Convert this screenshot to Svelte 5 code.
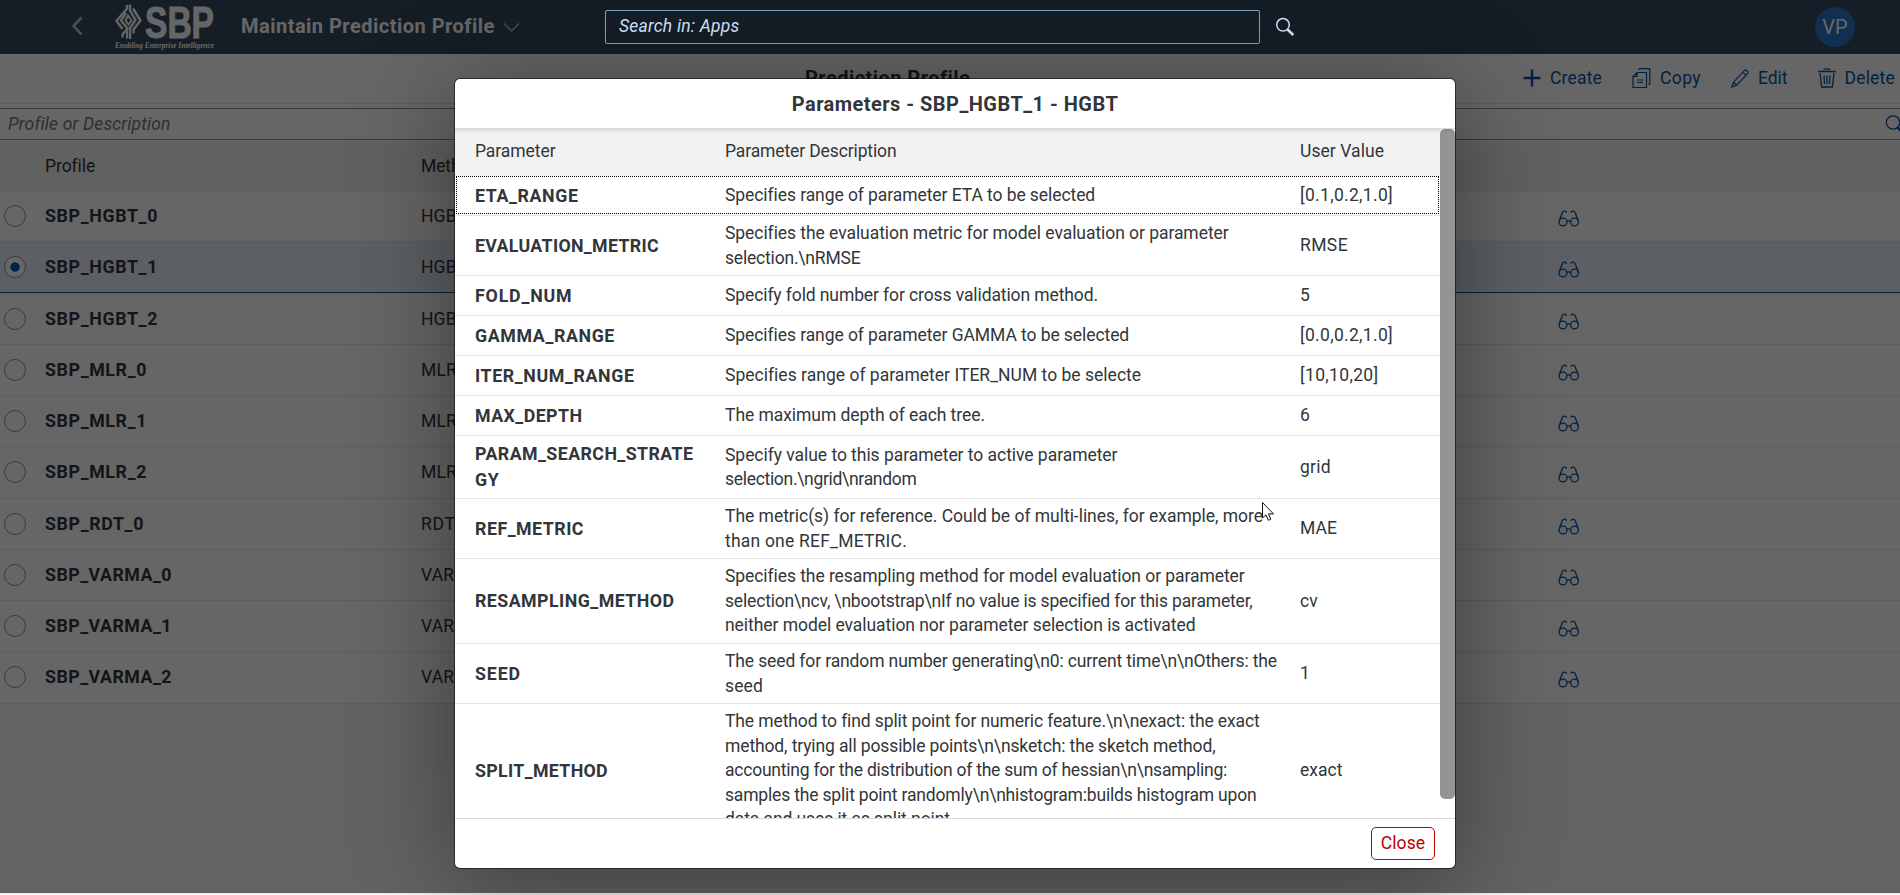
<script>
  // Spreads the letters of a text so that it takes up the given width.
  function fit(node, width) {
    if (!width) return;
    const natural = node.getBoundingClientRect().width;
    const count = node.textContent.length;
    node.style.letterSpacing = `${(width - natural) / count}px`;
  }

  const profiles = [
    ['SBP_HGBT_0', 'HGBT', 113],
    ['SBP_HGBT_1', 'HGBT', 113],
    ['SBP_HGBT_2', 'HGBT', 113],
    ['SBP_MLR_0', 'MLR', 102],
    ['SBP_MLR_1', 'MLR', 102],
    ['SBP_MLR_2', 'MLR', 102],
    ['SBP_RDT_0', 'RDT', 99],
    ['SBP_VARMA_0', 'VARMA', 127],
    ['SBP_VARMA_1', 'VARMA', 127],
    ['SBP_VARMA_2', 'VARMA', 127]
  ];
  const selected = 'SBP_HGBT_1';
  const methodWidth = { HGBT: 46, MLR: 36, RDT: 34.5, VARMA: 60.5 };

  // Each text is a list of [line, width].
  const params = [
    { h: 40, name: [['ETA_RANGE', 103.5]], text: [['Specifies range of parameter ETA to be selected', 369.5]], value: ['[0.1,0.2,1.0]', 93] },
    { h: 60, name: [['EVALUATION_METRIC', 184]], text: [['Specifies the evaluation metric for model evaluation or parameter', 503], ['selection.\\nRMSE', 135.5]], value: ['RMSE', 48] },
    { h: 40, name: [['FOLD_NUM', 97.5]], text: [['Specify fold number for cross validation method.', 373]], value: ['5', 0] },
    { h: 40, name: [['GAMMA_RANGE', 140]], text: [['Specifies range of parameter GAMMA to be selected', 403.5]], value: ['[0.0,0.2,1.0]', 93] },
    { h: 40, name: [['ITER_NUM_RANGE', 159.5]], text: [['Specifies range of parameter ITER_NUM to be selecte', 415.5]], value: ['[10,10,20]', 78.5] },
    { h: 40, name: [['MAX_DEPTH', 107.5]], text: [['The maximum depth of each tree.', 260]], value: ['6', 0] },
    { h: 63, name: [['PARAM_SEARCH_STRATE', 218.5], ['GY', 24.5]], text: [['Specify value to this parameter to active parameter', 392.5], ['selection.\\ngrid\\nrandom', 191.5]], value: ['grid', 31] },
    { h: 60, name: [['REF_METRIC', 109]], text: [['The metric(s) for reference. Could be of multi-lines, for example, more', 538], ['than one REF_METRIC.', 182]], value: ['MAE', 37] },
    { h: 85, name: [['RESAMPLING_METHOD', 199.5]], text: [['Specifies the resampling method for model evaluation or parameter', 519], ['selection\\ncv, \\nbootstrap\\nIf no value is specified for this parameter,', 527], ['neither model evaluation nor parameter selection is activated', 470.5]], value: ['cv', 18] },
    { h: 60, name: [['SEED', 46]], text: [['The seed for random number generating\\n0: current time\\n\\nOthers: the', 552], ['seed', 38]], value: ['1', 0] },
    { h: 134, name: [['SPLIT_METHOD', 133]], text: [['The method to find split point for numeric feature.\\n\\nexact: the exact', 534], ['method, trying all possible points\\n\\nsketch: the sketch method,', 490.5], ['accounting for the distribution of the sum of hessian\\n\\nsampling:', 502], ['samples the split point randomly\\n\\nhistogram:builds histogram upon', 531.5], ['data and uses it as split point', 225]], value: ['exact', 42.5] }
  ];
</script>

<div class="page">
  <header class="shell">
    <svg class="back" width="13" height="20" viewBox="0 0 13 20"><path d="M10.500 1.500 2.500 10l8 8.500" fill="none" stroke="#a9c6de" stroke-width="2.600" /></svg>
    <svg class="logo" width="102" height="54" viewBox="0 0 102 54">
      <g fill="none" stroke="#fff" stroke-width="2.400">
        <path d="M13 5v3.500L2.500 21l6 8" />
        <path d="M16 4.500v6L21.500 20 16 28v11" />
        <path d="M19 8.500 26.500 20.500 19.500 29.500v4" />
        <path d="M12 13 7 20.500l6.500 8-5 6v3" />
        <path d="M13 38.500v-8M14 15.500 11.500 20.500l3 4 3-4z" stroke-width="2" />
      </g>
      <text x="31" y="38" class="sbp" textLength="69" lengthAdjust="spacingAndGlyphs">SBP</text>
      <text x="1" y="48" class="tag" textLength="99" lengthAdjust="spacingAndGlyphs">Enabling Enterprise Intelligence</text>
    </svg>
    <h1><span use:fit={253.500}>Maintain Prediction Profile</span></h1>
    <svg class="down" width="17" height="11" viewBox="0 0 17 11"><path d="m1 1.500 7.500 7.500L16 1.500" fill="none" stroke="#a9c6de" stroke-width="1.500" /></svg>
    <div class="shell-search">
      <div class="field"><span use:fit={120.500}>Search in: Apps</span></div>
      <svg width="20" height="20" viewBox="0 0 20 20" fill="none" stroke="#d1e8ff"><circle cx="8" cy="7.800" r="6.300" stroke-width="1.500" /><path d="m12.500 12.500 5.800 5.500" stroke-width="2.600" /></svg>
    </div>
    <div class="avatar">VP</div>
  </header>

  <div class="toolbar">
    <h2><span use:fit={165}>Prediction Profile</span></h2>
    <div class="actions">
      <button><svg width="18" height="20" viewBox="0 0 18 20"><path d="M9 1.500v17M.5 10h17" stroke-width="2.400" /></svg><span use:fit={52}>Create</span></button>
      <button><svg width="19" height="20" viewBox="0 0 19 20"><path d="M5 4.500h9.500v15H1V8.500zM5 4.500v4H1M5 12h6M5 14.500h6M6.500 2l1-1.300h10.300v15.500h-1.500" stroke-width="1.200" /></svg><span use:fit={41}>Copy</span></button>
      <button><svg width="18" height="20" viewBox="0 0 18 20"><path d="M1 19l1.500-4.800L13.800 2.200q.9-.7 1.700.1l1.300 1.300q.7.900 0 1.700L5.600 17.200zM12 4.200l3 3.100M2.500 14.200l3.100 3" stroke-width="1.200" /></svg><span use:fit={29.500}>Edit</span></button>
      <button><svg width="18" height="20" viewBox="0 0 18 20"><path d="M.3 3.500h17.400M5.500 1.500q3.500-1.300 7 0M2 5l1.600 14h10.800L16 5M6 7.500l.5 8.500M9 7.500V16M12 7.500l-.5 8.500" stroke-width="1.300" /></svg><span use:fit={50.500}>Delete</span></button>
    </div>
  </div>

  <div class="filter">
    <div class="input">
      <span use:fit={162}>Profile or Description</span>
      <svg width="17" height="18" viewBox="0 0 17 18" fill="none" stroke="#0854a0"><circle cx="8" cy="7.500" r="6.700" stroke-width="1.200" /><path d="m12 12 5 5" stroke-width="2.400" /></svg>
    </div>
  </div>

  <div class="list">
    <div class="row head"><span></span><span><i use:fit={49.500}>Profile</i></span><span><i use:fit={59}>Method</i></span></div>
    {#each profiles as [name, method, w]}
      <div class="row" class:selected={name === selected}>
        <span class="radio"></span>
        <b><i use:fit={w}>{name}</i></b>
        <span><i use:fit={methodWidth[method]}>{method}</i></span>
        <svg width="22" height="17" viewBox="0 0 22 17" fill="none" stroke="#0854a0" stroke-width="1.300"><circle cx="5" cy="12" r="3.900" /><circle cx="16.500" cy="12" r="3.900" /><path d="M8.900 11.300q1.800-1 3.700 0M1.300 10.500 4.400 2.600Q5 1 7 1.200q1.500.3 1.300 1.700M20.200 10.500 17.100 2.600Q16.500 1 14.500 1.200q-1.500.3-1.300 1.700" /></svg>
      </div>
    {/each}
  </div>
</div>

<div class="overlay"></div>

<div class="dialog">
  <div class="title"><span use:fit={326.500}>Parameters - SBP_HGBT_1 - HGBT</span></div>
  <div class="body">
    <div class="table">
      <div class="prow phead">
        <span><i use:fit={80.500}>Parameter</i></span><span><i use:fit={171.500}>Parameter Description</i></span><span><i use:fit={84}>User Value</i></span>
      </div>
      {#each params as p, n}
        <div class="prow" class:focus={n === 0} style:height="{p.h}px">
          <div class="name">{#each p.name as [line, w]}<div><i use:fit={w}>{line}</i></div>{/each}</div>
          <div class="text">{#each p.text as [line, w]}<div><i use:fit={w}>{line}</i></div>{/each}</div>
          <div class="text"><div><i use:fit={p.value[1]}>{p.value[0]}</i></div></div>
        </div>
      {/each}
    </div>
    <div class="track"><div class="thumb"></div></div>
  </div>
  <div class="footer"><button><span use:fit={44.500}>Close</span></button></div>
</div>

<svg class="cursor" width="14" height="21" viewBox="0 0 14 21"><path d="M1.500 1.500v15.500l3.500-3.200 2.300 5.500 2.500-1.100L7.500 12.900h5z" fill="#fff" stroke="#111" stroke-width="1" /></svg>

<style>
  :global(body) {
    margin: 0;
    overflow: hidden;
    background: #f2f2f2;
    font-family: Roboto, 'Liberation Sans', sans-serif;
    font-size: 17.5px;
    color: #32363a;
  }
  i { font-style: normal; }
  span, i { white-space: nowrap; }
  svg { display: block; flex: none; }
  button { font: inherit; background: none; border: 0; padding: 0; margin: 0; }

  .page { height: 893px; background: #f7f7f7; overflow: hidden; }
  .overlay { position: absolute; inset: 0 0 auto 0; height: 893px; background: rgba(0, 0, 0, 0.6); z-index: 1; }

  .shell { height: 54px; background: #354a5f; display: flex; align-items: center; color: #fff; }
  .back { margin: -2px 0 0 71px; }
  .logo { margin-left: 30px; }
  .sbp { font: bold 45px 'Liberation Sans', sans-serif; fill: #fff; stroke: #fff; stroke-width: 1px; }
  .tag { font: italic bold 9px 'Liberation Serif', serif; fill: #fff; }
  h1 { margin: 0 0 2px 25px; width: 262px; font-size: 20px; font-weight: 700; }
  .down { margin: 0; }
  .shell-search { display: flex; align-items: center; margin-left: 85px; position: relative; z-index: 2; }
  .field { width: 655px; height: 34px; margin-bottom: 1px; box-sizing: border-box; border: 1px solid #7fa6c8; border-radius: 2px; padding: 0 13px 2px; display: flex; align-items: center; font-style: italic; color: #d1e8ff; }
  .shell-search svg { margin-left: 15px; }
  .avatar { width: 40px; height: 40px; border-radius: 50%; margin-left: auto; margin-right: 45px; background: #2b75c5; display: flex; align-items: center; justify-content: center; font-size: 20px; }

  .toolbar { height: 49px; background: #fff; border-bottom: 1px solid #e5e5e5; display: grid; grid-template-columns: 1fr auto; align-items: center; }
  h2 { margin: 0 0 2px; padding-left: 805px; font-size: 20px; font-weight: 700; line-height: 24px; color: #32363a; }
  .actions { display: flex; padding: 0 5px 1px 0; color: #0854a0; gap: 30px; }
  .actions button { display: flex; align-items: center; color: inherit; gap: 9px; }
  .actions span { margin-bottom: 1px; }
  .actions svg { fill: none; stroke: #0854a0; }

  .filter { height: 37px; background: #fff; padding-top: 4px; box-sizing: border-box; }
  .input { height: 32px; box-sizing: border-box; border: 1px solid #89919a; border-width: 1px 0; display: flex; align-items: center; justify-content: space-between; padding-left: 8px; font-style: italic; color: #74777a; }
  .input svg { margin-right: -2px; }

  .row { display: grid; grid-template-columns: 45px 376px 1137px auto; align-items: center; justify-content: start; height: 51.25px; box-sizing: border-box; border-bottom: 1px solid #e5e5e5; background: #fff; }
  .head { height: 50px; background: #f2f2f2; padding-top: 1px; }
  .row svg { margin-top: 5px; }
  .row b { font-size: 17.8px; padding-bottom: 1px; }
  .selected { height: 50.25px; margin-bottom: 1px; background: #e5f0fa; border-bottom-color: #0854a0; }
  .radio { width: 20px; height: 20px; border: 1px solid #89919a; border-radius: 50%; margin-left: 4px; background: #fff; }
  .selected .radio { background: radial-gradient(circle, #0854a0 4.300px, #fff 5px); }

  .dialog { position: absolute; z-index: 3; left: 455px; top: 79px; width: 1000px; height: 789px; background: #fff; border-radius: 5px; overflow: hidden; box-shadow: 0 0 0 1px rgba(0, 0, 0, 0.5), 0 12px 100px rgba(0, 0, 0, 0.42); display: flex; flex-direction: column; }
  .title { height: 49px; border-bottom: 1px solid #d9d9d9; display: flex; align-items: center; justify-content: center; font-size: 20px; font-weight: 700; box-shadow: 0 0 5px rgba(0, 0, 0, 0.2); position: relative; }
  .body { flex: 1; min-height: 0; display: flex; overflow: hidden; }
  .table { flex: 1; }
  .prow { display: grid; grid-template-columns: 250px 575px auto; padding-left: 20px; align-items: center; box-sizing: border-box; border-bottom: 1px solid #e5e5e5; }
  .phead { height: 47px; background: #f2f2f2; border: 0; padding-bottom: 4px; }
  .focus { position: relative; }
  .focus::before { content: ''; position: absolute; inset: 0 1px 1px 1px; border: 1px dotted #000; }
  .name { font-weight: 700; font-size: 17.8px; line-height: 25.7px; padding-bottom: 0.3px; }
  .text { line-height: 24.5px; }
  .track { width: 15px; }
  .thumb { height: 670px; background: #949494; border-radius: 5px; }
  .footer { height: 49px; border-top: 1px solid #d9d9d9; display: flex; align-items: center; justify-content: flex-end; padding-right: 20px; }
  .footer button { width: 64px; height: 33px; border: 1px solid #b00; border-radius: 5px; color: #b00; padding-bottom: 2px; }
  .cursor { position: absolute; z-index: 4; left: 1261px; top: 501px; }
</style>
